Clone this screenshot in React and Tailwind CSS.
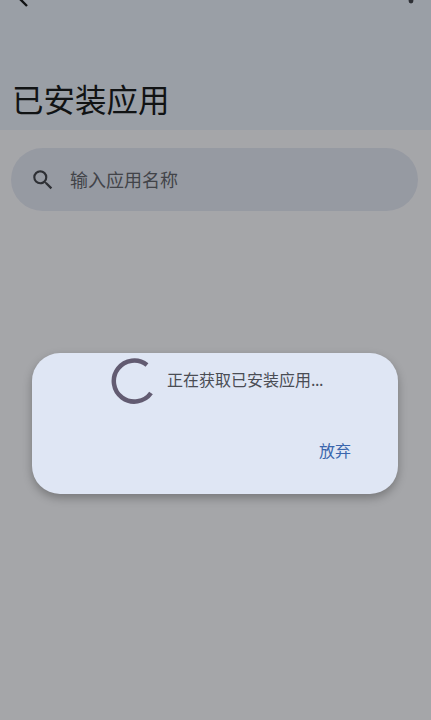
export default function App() {
  return (
    <div className="relative h-[720px] w-[431px] overflow-hidden bg-[#f4f5fa] font-['Noto_Sans_CJK_SC',sans-serif]">
      <header className="flex h-[130px] flex-col bg-[#e3eaf5]">
        <div className="-mt-[12px] flex h-[24px] items-center justify-between pr-[17px] pl-[16px]">
          <svg width="16" height="24" viewBox="0 0 16 24" fill="none" stroke="#1a1c1e" strokeWidth="2.4">
            <path d="M11 5 L4.5 11.5 L11 18" />
          </svg>
          <svg width="6" height="24" viewBox="0 0 6 24" fill="#44474e">
            <circle cx="3" cy="13" r="2.4" />
          </svg>
        </div>
        <h1 className="mt-[66px] pl-[12px] text-[31.5px] leading-[40px] font-normal text-[#1a1c1e]">已安装应用</h1>
      </header>
      <div className="mt-[18px] mr-[13px] ml-[11px] flex h-[63px] items-center rounded-full bg-[#dee3ef] pl-[19px]">
        <svg width="26" height="26" viewBox="0 0 24 24" fill="#44474e">
          <path d="M15.5 14h-.79l-.28-.27A6.47 6.47 0 0 0 16 9.5 6.5 6.5 0 1 0 9.5 16c1.61 0 3.09-.59 4.23-1.57l.27.28v.79l5 4.99L20.49 19l-4.99-5zm-6 0C7.01 14 5 11.99 5 9.5S7.01 5 9.5 5 14 7.01 14 9.5 11.99 14 9.5 14z" />
        </svg>
        <span className="-mt-[1px] ml-[14px] text-[18px] text-[#62656c]">输入应用名称</span>
      </div>
      <div className="absolute inset-0 bg-black/32" />
      <div className="absolute top-[353px] left-[32px] flex h-[141px] w-[366px] flex-col rounded-[28px] bg-[#dfe6f4] shadow-[0_4px_10px_rgba(0,0,0,0.28)]">
        <div className="flex items-center pt-[5px] pl-[78px]">
          <svg width="46" height="46" viewBox="0 0 46 46" fill="none" stroke="#625b71" strokeWidth="4.5">
            <path d="M37 7 A20.5 20.5 0 1 0 41 35" />
          </svg>
          <span className="-mt-[4px] ml-[11px] text-[16px] leading-[20px] text-[#4a4d54]">
            正在获取已安装应用<span className="tracking-[-0.5px]">...</span>
          </span>
        </div>
        <div className="mt-auto flex justify-end pr-[47px] pb-[34px]">
          <span className="text-[16px] leading-[20px] text-[#3a66ad]">放弃</span>
        </div>
      </div>
    </div>
  );
}
